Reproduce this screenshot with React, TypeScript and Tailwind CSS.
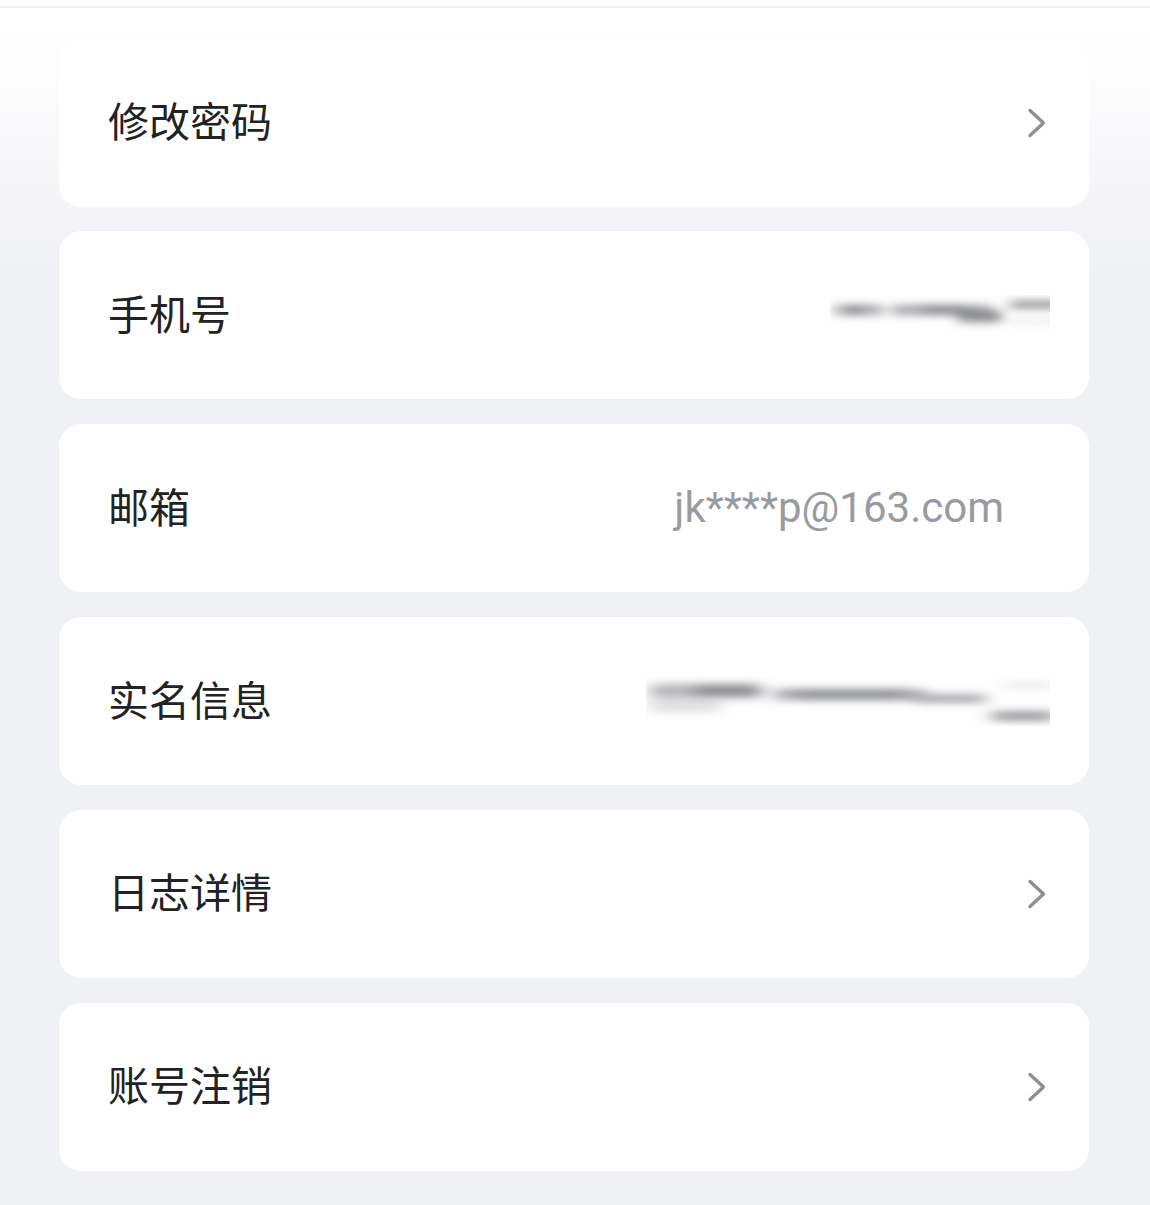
import React from "react";

const cjk = "font-['Noto_Sans_CJK_SC','Noto_Sans',sans-serif]";

function Chevron() {
  return (
    <svg width="20" height="32" viewBox="0 0 20 32" fill="none" className="shrink-0">
      <path
        d="M3 3.5 L16 15.5 Q16.6 16 16 16.5 L3 28.5"
        stroke="#8e8e93"
        strokeWidth="3.4"
        strokeLinecap="round"
        strokeLinejoin="round"
      />
    </svg>
  );
}

function PhoneBlur() {
  return (
    <svg width="220" height="40" viewBox="0 0 220 40" className="shrink-0">
      <defs>
        <filter id="bp" x="-20%" y="-60%" width="140%" height="220%">
          <feGaussianBlur stdDeviation="7 4" />
        </filter>
      </defs>
      <g filter="url(#bp)">
        <rect x="4" y="10" width="50" height="10" rx="4" fill="#a8a8ad" />
        <rect x="16" y="11" width="18" height="8" rx="3" fill="#7a7b80" />
        <rect x="62" y="10" width="100" height="10" rx="4" fill="#a3a4a9" />
        <rect x="92" y="11" width="46" height="8" rx="3" fill="#7e7f84" />
        <rect x="128" y="16" width="44" height="11" rx="4" fill="#86878c" />
        <rect x="180" y="6" width="50" height="7" rx="2" fill="#85868b" />
        <rect x="180" y="24" width="50" height="4" fill="#e4e4e7" />
      </g>
    </svg>
  );
}

function NameBlur() {
  return (
    <svg width="404" height="50" viewBox="0 0 404 50" className="shrink-0">
      <defs>
        <filter id="bn" x="-10%" y="-60%" width="120%" height="220%">
          <feGaussianBlur stdDeviation="9 4.5" />
        </filter>
      </defs>
      <g filter="url(#bn)">
        <rect x="4" y="8" width="112" height="14" rx="5" fill="#b4b4b9" />
        <rect x="48" y="9" width="66" height="11" rx="4" fill="#86878c" />
        <rect x="4" y="24" width="70" height="12" rx="4" fill="#dedee2" />
        <rect x="128" y="13" width="150" height="11" rx="4" fill="#a4a5aa" />
        <rect x="150" y="14" width="108" height="9" rx="3" fill="#85868b" />
        <rect x="268" y="19" width="72" height="7" rx="3" fill="#909196" />
        <rect x="346" y="36" width="62" height="8" rx="2" fill="#84858a" />
        <rect x="356" y="7" width="52" height="5" fill="#e4e4e7" />
      </g>
    </svg>
  );
}

type Row = {
  label: string;
  right: React.ReactNode;
  pr: string;
};

const rows: Row[] = [
  { label: "修改密码", right: <Chevron />, pr: "pr-[42px]" },
  { label: "手机号", right: <PhoneBlur />, pr: "pr-[39px]" },
  {
    label: "邮箱",
    right: (
      <span className="font-['Roboto',sans-serif] text-[42px] leading-none text-[#9a9ba0]">
        jk****p@163.com
      </span>
    ),
    pr: "pr-[85px]",
  },
  { label: "实名信息", right: <NameBlur />, pr: "pr-[39px]" },
  { label: "日志详情", right: <Chevron />, pr: "pr-[42px]" },
  { label: "账号注销", right: <Chevron />, pr: "pr-[42px]" },
];

export default function App() {
  return (
    <div className="h-[1205px] w-full overflow-hidden bg-[linear-gradient(to_bottom,#ffffff_30px,#f0f1f5_270px)]">
      <div className="h-[6px] bg-white" />
      <div className="h-[2px] bg-[#efeff4]" />
      <div className="ml-[59px] flex w-[1030px] flex-col gap-[24.8px] pt-[30.7px]">
        {rows.map((row) => (
          <div
            key={row.label}
            className={`flex h-[168px] items-center justify-between rounded-[22px] bg-white pl-[49px] ${row.pr}`}
          >
            <span className={`${cjk} mb-[6px] text-[41px] leading-none text-[#222222]`}>{row.label}</span>
            {row.right}
          </div>
        ))}
      </div>
    </div>
  );
}
